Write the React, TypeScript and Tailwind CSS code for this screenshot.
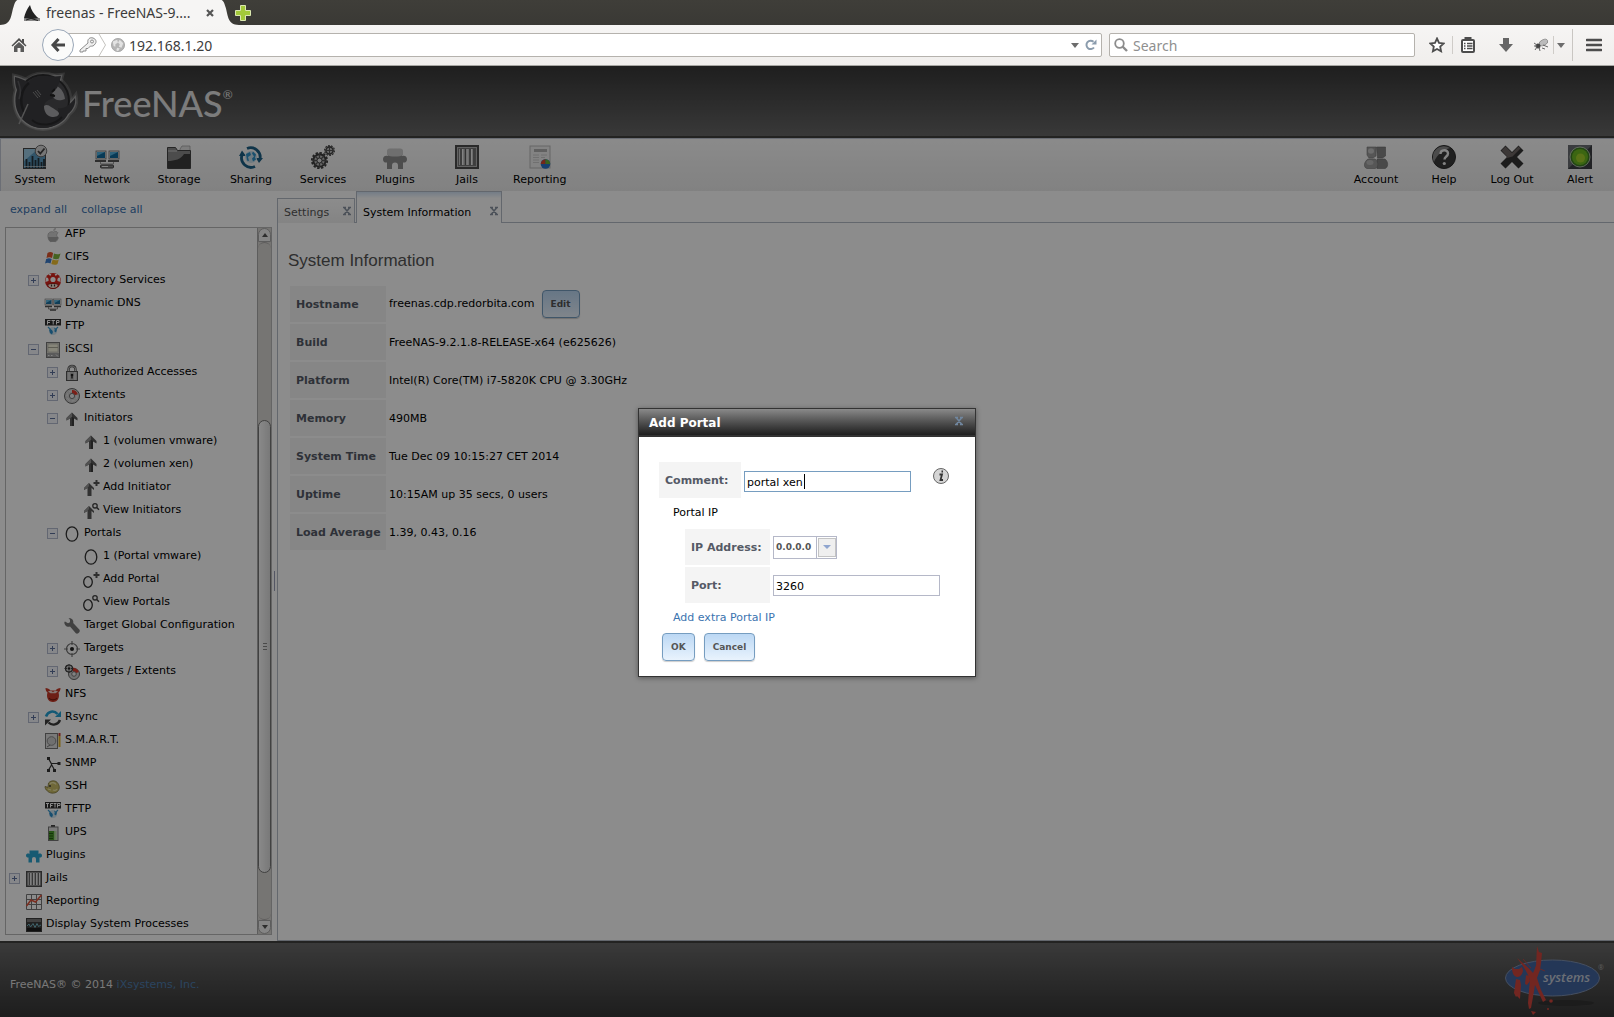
import { ReactNode } from "react";

type TreeNode = {
  label: string;
  level: 1 | 2 | 3 | 4;
  icon: string;
  toggle?: "plus" | "minus";
};

const TREE: TreeNode[] = [
  { label: "AFP", level: 2, icon: "apple" },
  { label: "CIFS", level: 2, icon: "windows" },
  { label: "Directory Services", level: 2, icon: "mushroom", toggle: "plus" },
  { label: "Dynamic DNS", level: 2, icon: "network" },
  { label: "FTP", level: 2, icon: "ftp" },
  { label: "iSCSI", level: 2, icon: "drive", toggle: "minus" },
  { label: "Authorized Accesses", level: 3, icon: "lock", toggle: "plus" },
  { label: "Extents", level: 3, icon: "extent", toggle: "plus" },
  { label: "Initiators", level: 3, icon: "arrow", toggle: "minus" },
  { label: "1 (volumen vmware)", level: 4, icon: "arrow" },
  { label: "2 (volumen xen)", level: 4, icon: "arrow" },
  { label: "Add Initiator", level: 4, icon: "arrowAdd" },
  { label: "View Initiators", level: 4, icon: "arrowView" },
  { label: "Portals", level: 3, icon: "portal", toggle: "minus" },
  { label: "1 (Portal vmware)", level: 4, icon: "portal" },
  { label: "Add Portal", level: 4, icon: "portalAdd" },
  { label: "View Portals", level: 4, icon: "portalView" },
  { label: "Target Global Configuration", level: 3, icon: "wrench" },
  { label: "Targets", level: 3, icon: "target", toggle: "plus" },
  { label: "Targets / Extents", level: 3, icon: "targetExtent", toggle: "plus" },
  { label: "NFS", level: 2, icon: "daemon" },
  { label: "Rsync", level: 2, icon: "rsync", toggle: "plus" },
  { label: "S.M.A.R.T.", level: 2, icon: "smart" },
  { label: "SNMP", level: 2, icon: "snmp" },
  { label: "SSH", level: 2, icon: "ssh" },
  { label: "TFTP", level: 2, icon: "tftp" },
  { label: "UPS", level: 2, icon: "ups" },
  { label: "Plugins", level: 1, icon: "plugin" },
  { label: "Jails", level: 1, icon: "jail", toggle: "plus" },
  { label: "Reporting", level: 1, icon: "chart" },
  { label: "Display System Processes", level: 1, icon: "processes" },
];

const INDENT = {
  1: "pl-[3px]",
  2: "pl-[22px]",
  3: "pl-[41px]",
  4: "pl-[60px]",
};

const INFO = [
  ["Hostname", "freenas.cdp.redorbita.com"],
  ["Build", "FreeNAS-9.2.1.8-RELEASE-x64 (e625626)"],
  ["Platform", "Intel(R) Core(TM) i7-5820K CPU @ 3.30GHz"],
  ["Memory", "490MB"],
  ["System Time", "Tue Dec 09 10:15:27 CET 2014"],
  ["Uptime", "10:15AM up 35 secs, 0 users"],
  ["Load Average", "1.39, 0.43, 0.16"],
];

const upArrow = (
  <>
    <path d="M8 1.500l5.500 5.500v2.500L10 7.500V15H6V7.500L2.500 9.500V7z" fill="#5a5a5a" />
    <path d="M8 1.500l-5.500 5.500v2.500L6 7.500l2-2z" fill="#949494" />
    <path d="M8 6v9h2V7z" fill="#3c3c3c" />
  </>
);

const smallUpArrow = (
  <>
    <path d="M6 3l5 5v2L8.500 8v8h-4V8L1 10V8z" fill="#5a5a5a" />
    <path d="M6 3L1 8v2l3.500-2L6 6z" fill="#949494" />
  </>
);

const plusBadge = <path d="M13.500 0v6M10.500 3h6" stroke="#555" strokeWidth="2" />;

const lensBadge = (
  <>
    <circle cx="12" cy="2.800" r="2.200" fill="none" stroke="#444" strokeWidth="1.300" />
    <path d="M13.700 4.500l2.300 2.300" stroke="#444" strokeWidth="1.500" />
  </>
);

const globe = (
  <>
    <circle cx="8" cy="12" r="4" fill="#d3e6f1" />
    <path d="M4 10.500l3 .5 1 2-1 2.500-2-1.500zM9 8.500l3 2-1 3-2-1.500 1-1z" fill="#2b8fca" />
    <path d="M3 8l3 3M13 8l-3 3" stroke="#3c9bd0" strokeWidth="1.200" />
  </>
);

const crosshair = (
  <>
    <circle cx="8" cy="8" r="5.500" fill="none" stroke="#666" strokeWidth="1.200" />
    <circle cx="8" cy="8" r="2" fill="#222" />
    <path d="M8 0v4M8 12v4M0 8h4M12 8h4" stroke="#777" strokeWidth="1.200" />
  </>
);

const ICONS: Record<string, ReactNode> = {
  apple: (
    <>
      <path
        d="M8.500 5c1.500-1 3.500-.8 4.500.8-1.800 1.200-1.700 4 .4 4.900-.7 2-1.800 4-3.200 4-1 0-1.300-.5-2.200-.5s-1.300.5-2.200.5C3.800 14.700 1.500 8.500 3.800 6 5 4.600 7 4.400 8.500 5z"
        fill="#d2d2d2"
        stroke="#a0a0a0"
        strokeWidth=".6"
      />
      <path d="M8.200 4C8.200 2 9.500.8 11 .8 11 2.800 9.800 4 8.200 4z" fill="#c4c4c4" />
      <path d="M3 10h10c.8 1-2 4.700-3.200 4.700H5.500C4 14 3.200 12 3 10z" fill="#a5a5a5" />
    </>
  ),
  windows: (
    <>
      <path d="M2.500 3c2-1.200 3.600-1.200 5.600 0L7 8C5 7 3.500 7 1.500 8z" fill="#e0552c" />
      <path d="M9 3.500c2 1 4 1.200 6.500 0L14 8.500c-2 1-4 .8-6 0z" fill="#7fb53c" />
      <path d="M1.200 9c2-1 3.600-1 5.500 0L5.500 13.500c-2-1-3.500-1-5.500 0z" fill="#3d7dcc" />
      <path d="M7.600 9.500c2 1 4 1.200 6.200 0L12.500 14c-2 1.200-4 1-6.200 0z" fill="#f2c230" />
    </>
  ),
  mushroom: (
    <>
      <circle cx="8" cy="8" r="8" fill="#d9251d" />
      <circle cx="8" cy="6.500" r="2.600" fill="#fff" />
      <path d="M1 4.500C3 4 4 6 3.500 8L.3 9zM15 4.500C13 4 12 6 12.500 8l3.200 1z" fill="#fff" />
      <path d="M4 1.200l2 .8M12 1.200L10 2" stroke="#fff" strokeWidth="1.500" />
      <path d="M2.500 11.500c3-1.500 8-1.500 11 0-.5 2.500-2.500 4-5.500 4s-5-1.500-5.500-4z" fill="#f7e3d6" stroke="#a01a14" />
      <path d="M6.500 11.500v2M9.500 11.500v2" stroke="#333" strokeWidth="1.200" />
    </>
  ),
  network: (
    <>
      <rect x="0" y="3" width="7.500" height="6" fill="#efefef" stroke="#777" strokeWidth=".6" />
      <rect x="8.500" y="3" width="7.500" height="6" fill="#efefef" stroke="#777" strokeWidth=".6" />
      <path d="M1 4h5.500v4H1zM9.500 4H15v4H9.500z" fill="#1c6f9f" />
      <path d="M1 4h5.500L1 7zM9.500 4H15L9.500 7z" fill="#5fb9e2" />
      <path d="M0 10.500h7M9 10.500h7" stroke="#555" strokeWidth="1.600" />
      <path d="M3.500 11v2h9v-2" stroke="#888" fill="none" />
      <rect x="5" y="13" width="6" height="2" fill="#777" />
    </>
  ),
  ftp: (
    <>
      {globe}
      <rect width="16" height="6.500" fill="#303030" />
      <path d="M2.500 5.500v-4h3M2.500 3.500h2.500M6.500 1.500h3.500M8.200 1.500v4M11.500 5.500v-4h2.500v2h-2.500" stroke="#fff" fill="none" />
    </>
  ),
  tftp: (
    <>
      {globe}
      <rect width="16" height="6.500" fill="#303030" />
      <path d="M1 1.500h3M2.500 1.500v4M5.500 5.500v-4H8M5.500 3.500h2M8.500 1.500h3M10 1.500v4M12.500 5.500v-4H15v2h-2.500" stroke="#fff" fill="none" />
    </>
  ),
  drive: (
    <>
      <rect x="1.500" y=".5" width="13" height="15" fill="#d8d6c8" stroke="#777" />
      <rect x="3" y="2" width="10" height="8" fill="#f5f3dc" stroke="#aaa" strokeWidth=".6" />
      <path d="M3 5.500h10" stroke="#a9a898" />
      <rect x="2" y="11" width="12" height="4" fill="#a5a5a5" />
      <path d="M3 13.500h1.500M6 13.500h1.500M11 12.500l2 2" stroke="#eee" />
    </>
  ),
  lock: (
    <>
      <path d="M4.500 7V4.500C4.500 2.300 6 1 8 1s3.500 1.300 3.500 3.500V7" fill="none" stroke="#555" strokeWidth="2.400" />
      <path d="M4.500 7V4.500C4.500 2.300 6 1 8 1s3.500 1.300 3.500 3.500V7" fill="none" stroke="#eee" strokeWidth=".8" />
      <rect x="2.500" y="6.500" width="11" height="9" fill="#b9b9b9" stroke="#555" />
      <path d="M5 7v8M11 7v8" stroke="#e6e6e6" />
      <circle cx="8" cy="10" r="1.300" fill="#222" />
      <path d="M8 10v3.500" stroke="#222" strokeWidth="1.400" />
    </>
  ),
  extent: (
    <>
      <circle cx="8" cy="8" r="7.500" fill="#d0d0d0" stroke="#666" />
      <circle cx="8" cy="8" r="5" fill="none" stroke="#ececec" strokeDasharray="3 2" />
      <path d="M8 8V2a6 6 0 015.800 4.300z" fill="#e03a2c" />
      <circle cx="8" cy="8" r="2.600" fill="#ececec" stroke="#777" />
    </>
  ),
  arrow: upArrow,
  arrowAdd: (
    <>
      {smallUpArrow}
      {plusBadge}
    </>
  ),
  arrowView: (
    <>
      {smallUpArrow}
      {lensBadge}
    </>
  ),
  portal: <ellipse cx="8" cy="8" rx="5.800" ry="7.200" fill="none" stroke="#333" strokeWidth="1.300" />,
  portalAdd: (
    <>
      <ellipse cx="5" cy="10" rx="4.300" ry="5.300" fill="none" stroke="#333" strokeWidth="1.300" />
      {plusBadge}
    </>
  ),
  portalView: (
    <>
      <ellipse cx="5" cy="10" rx="4.300" ry="5.300" fill="none" stroke="#333" strokeWidth="1.300" />
      {lensBadge}
    </>
  ),
  wrench: (
    <path
      d="M1 3.500l3 1.800 2-1L6 1.800 4.500.3C7.500-.5 10 2 9.200 5l6.300 6.800c1.200 2-1.700 5-3.700 3.500L6 8.500C3 9.800 0 7 .4 4z"
      fill="#777"
    />
  ),
  target: crosshair,
  targetExtent: (
    <>
      <circle cx="10" cy="10" r="5.500" fill="#d0d0d0" stroke="#666" />
      <path d="M8 3.500c3 0 6 1.500 6.800 4.500L10 10z" fill="#e03a2c" />
      <circle cx="10" cy="10" r="2.300" fill="#eee" stroke="#777" />
      <circle cx="5" cy="4.500" r="3.500" fill="#ccc" stroke="#333" strokeWidth="1.200" />
      <circle cx="5" cy="4.500" r="1.300" fill="#222" />
      <path d="M5 0v2.500M5 6.500V9M.5 4.500H3M7 4.500h2.500" stroke="#444" />
    </>
  ),
  daemon: (
    <>
      <path d="M.5 1c2 0 4 1 5 2.500h5C11.500 2 13.500 1 15.500 1c0 2-.8 3.500-2 4.500C15 10 13 15 8 15S1 10 2.500 5.500C1.300 4.500.5 3 .5 1z" fill="#c73a28" />
      <path d="M3 4.500c1.500-1.300 4-1 5 .8 1-1.800 3.500-2.100 5-.8l-2.500 1.800h-5z" fill="#f1d7d1" />
      <path d="M4 11c1.500 2.500 6.500 2.500 8 0" stroke="#7a1c12" fill="none" strokeWidth="1.200" />
    </>
  ),
  rsync: (
    <>
      <path d="M1 6.500C3 1 9 0 12.500 4" fill="none" stroke="#23a3d6" strokeWidth="2.600" />
      <path d="M10 7h6V1z" fill="#23a3d6" />
      <path d="M15 10c-2 5-8 6-11.500 2.500" fill="none" stroke="#3c3c3c" strokeWidth="2.400" />
      <path d="M6 9.500H0v6z" fill="#3c3c3c" />
    </>
  ),
  smart: (
    <>
      <rect x=".5" y=".5" width="12" height="15" fill="#dedede" stroke="#777" />
      <circle cx="6.500" cy="8" r="4.300" fill="#cdcdcd" stroke="#8a8a8a" />
      <path d="M2 14l3-2" stroke="#777" />
      <path d="M14.500 3v11" stroke="#e5b52a" strokeWidth="2" />
      <path d="M14.500 0v3" stroke="#c63a2d" strokeWidth="2" />
    </>
  ),
  snmp: (
    <>
      <path d="M3.500 2.500L6.500 8v1L3.500 14M6.500 8.500L9.500 14M6.500 7.500H14" stroke="#333" fill="none" strokeWidth="1.200" />
      <path d="M2 1h3v3H2zM2 13h3v3H2zM8 13h3v3H8zM12.500 6h3v3h-3z" fill="#333" />
    </>
  ),
  ssh: (
    <>
      <path d="M3.500 4C6 1 11 1 13 4.500c2 3 1.500 6-.5 8-3 2.500-8 2-10-.5C.5 11 0 8.500 0 7.500l3 .8z" fill="#cbbd68" stroke="#7c753f" strokeWidth=".8" />
      <path d="M5 5c2-2 5-1.500 6 .5M3 10l3 1M8 11c2 1 3.500 0 4-1" stroke="#eee7ad" fill="none" strokeWidth="1.300" />
      <circle cx="5" cy="7" r=".9" fill="#333" />
    </>
  ),
  ups: (
    <>
      <rect x="6" y="0" width="4" height="2" fill="#444" />
      <rect x="3.500" y="2" width="9.500" height="13.500" fill="#dedede" stroke="#777" />
      <rect x="4" y="6" width="5.500" height="9" fill="#4c9c2c" />
      <path d="M4 8.500h4M4 11h4M4 13.500h4" stroke="#266013" />
      <path d="M10.500 6v9" stroke="#b4dc9f" strokeWidth="2" />
    </>
  ),
  plugin: (
    <path d="M3.500 2.500h9V6c1-.8 3.500-.6 3.500 1.500 0 2-1.500 2-2 2H13.500v5H10v-3.500a2 2 0 00-4 0v3.500H2.500v-5H2c-1 0-2-.5-2-2C0 5.400 2.500 5.200 3.500 6z" fill="#2ba5d0" />
  ),
  jail: (
    <>
      <rect x=".7" y=".7" width="14.600" height="14.600" fill="#bbb" stroke="#4d4d4d" strokeWidth="1.400" />
      <path d="M4.500 2v12M7.500 2v12M10.500 2v12M13.500 2v12" stroke="#e8e8e8" />
      <path d="M3.500 2v12M6.500 2v12M9.500 2v12M12.500 2v12" stroke="#666" />
    </>
  ),
  chart: (
    <>
      <path d="M.5 .5h15v15H.5zM5.500.5v15M10.500.5v15M.5 5.500h15M.5 10.500h15" fill="none" stroke="#777" />
      <path d="M.5 12L5 6l4.500 2L15.500 1" fill="none" stroke="#e0553c" strokeWidth="1.600" />
    </>
  ),
  processes: (
    <>
      <rect x="0" y="1" width="16" height="14" fill="#3c3c3c" />
      <rect x="1" y="2" width="14" height="3" fill="#777" />
      <rect x="1" y="11" width="14" height="3" fill="#1c1c1c" />
      <path d="M1 9l2-2 1.500 3L7 6.500l2 4 2-4 1.500 3L15 8" fill="none" stroke="#74b5c4" />
    </>
  ),
};

const TOOLS: Record<string, ReactNode> = {
  System: (
    <>
      <rect x=".5" y="3.500" width="22" height="20" fill="#5a9abf" stroke="#444" />
      <path d="M1 4h14L1 16z" fill="#9ccbe4" />
      <path d="M3.500 23v-9M6.500 23v-6M9.500 23V11M12.500 23v-8M15.500 23V13M18.500 23v-6M21 23v-9" stroke="#26343d" strokeWidth="1.800" />
      <path d="M1 21.500h22" stroke="#ddd" strokeWidth=".6" />
      <circle cx="18" cy="6" r="5.800" fill="#d8d8d8" stroke="#6c6c6c" />
      <path d="M15 6l2.300 2.600L21.500 3.500" fill="none" stroke="#444" strokeWidth="1.800" />
    </>
  ),
  Network: (
    <>
      <rect x="1" y="6" width="10" height="8" fill="#eee" stroke="#666" strokeWidth=".8" />
      <rect x="14" y="6" width="10" height="8" fill="#eee" stroke="#666" strokeWidth=".8" />
      <path d="M2 7h8v6H2zM15 7h8v6h-8z" fill="#0f6a9d" />
      <path d="M2 7h8l-8 4zM15 7h8l-8 4z" fill="#55b3e0" />
      <path d="M0 16h11M13 16h11" stroke="#555" strokeWidth="2" />
      <path d="M5.500 17v2h13v-2" stroke="#999" fill="none" />
      <rect x="5.500" y="20" width="13" height="3" rx="1" fill="#888" stroke="#444" />
      <path d="M7 21.500h6" stroke="#eee" />
    </>
  ),
  Storage: (
    <>
      <path d="M13 4l2-3h8v22H13z" fill="#e2e2e2" stroke="#999" strokeWidth=".7" />
      <path d="M.5 2.500h8l2 3h13v18H.5z" fill="#8a8a8a" stroke="#444" />
      <path d="M1 23v-7C8 16 14 14 17 9h6v14z" fill="#3c3c3c" />
      <path d="M1 6h9" stroke="#ccc" />
    </>
  ),
  Sharing: (
    <>
      <path d="M8 3.500A9.500 9.500 0 0121 14M16 21.500A9.500 9.500 0 013 10" fill="none" stroke="#1c5f85" strokeWidth="2.800" />
      <path d="M17 13h7l-4 5zM0 11h7L3 5.500z" fill="#1c5f85" />
      <circle cx="12" cy="12" r="6" fill="#c9dfeb" />
      <path d="M7 9l4-2 1 3-3 2 1 4-2-.5zM14 6.500l3 3-1 3 1 2-3 2-1-3 2-2-2-3z" fill="#3093c8" />
    </>
  ),
  Services: (
    <>
      <circle cx="8.500" cy="15.500" r="6.200" fill="#bdbdbd" stroke="#3c3c3c" strokeWidth="2" />
      <circle cx="8.500" cy="15.500" r="7.700" fill="none" stroke="#3c3c3c" strokeWidth="1.800" strokeDasharray="2.400 1.600" />
      <path d="M8.500 9v13M2 15.500h13M4 11l9 9M13 11l-9 9" stroke="#555" strokeWidth="1.300" />
      <circle cx="8.500" cy="15.500" r="2.500" fill="#ddd" stroke="#444" />
      <circle cx="18.500" cy="5.500" r="3.600" fill="#bdbdbd" stroke="#444" strokeWidth="1.600" />
      <circle cx="18.500" cy="5.500" r="4.900" fill="none" stroke="#444" strokeWidth="1.200" strokeDasharray="1.800 1.200" />
      <path d="M18.500 2v7M15 5.500h7" stroke="#555" />
    </>
  ),
  Plugins: (
    <>
      <path d="M5 10h14v1c2-1 5 0 5 3s-2 4-4 3.500V24h-5v-3.500a3 3 0 00-6 0V24H4v-6.500C2 18 0 17 0 14s3-4 5-3z" fill="#8c8c8c" />
      <path d="M4 10V6c0-1.500 1-2.500 2.500-2.500h11C19 3.500 20 4.500 20 6v4c-3 2-13 2-16 0z" fill="#cacaca" />
    </>
  ),
  Jails: (
    <>
      <rect x="1" y="1" width="22" height="22" fill="#b5b5b5" stroke="#4d4d4d" strokeWidth="2" />
      <rect x="3.500" y="3.500" width="17" height="17" fill="#c6c6c6" stroke="#777" />
      <path d="M6 4v16M10.500 4v16M15 4v16M19 4v16" stroke="#5c5c5c" strokeWidth="1.600" />
      <path d="M7.500 4v16M12 4v16M16.500 4v16" stroke="#efefef" />
    </>
  ),
  Reporting: (
    <>
      <rect x="2" y="1" width="20" height="22" fill="#efefef" stroke="#b9b9b9" />
      <rect x="6" y="4" width="13" height="3" fill="#b0b0b0" />
      <path d="M5 10h6M5 12.500h6M5 15h6M5 17.500h6M13 10h6M13 12.500h4" stroke="#ccc" />
      <circle cx="17.500" cy="19" r="4.800" fill="#2a73c9" />
      <path d="M17.500 19v-4.800a4.800 4.800 0 00-4.700 4.800z" fill="#d5482f" />
      <path d="M17.500 19v-4.800a4.800 4.800 0 014.700 4.800z" fill="#6bb536" />
    </>
  ),
  Account: (
    <>
      <path d="M12.500 2h9v9l-3 2h-5zM13 14h8c4 3 3 9 0 9.500h-8z" fill="#858585" stroke="#6b6b6b" strokeWidth=".6" />
      <path d="M3 2h9v9l-3 2H5l-2-3zM4 14h7c4 3 3.500 9 0 9.500H3c-4-1-3-7 1-9.500z" fill="#9d9d9d" stroke="#747474" strokeWidth=".6" />
      <ellipse cx="7" cy="6" rx="3" ry="2.800" fill="#c6c6c6" />
      <ellipse cx="6" cy="17.500" rx="3.500" ry="2.500" fill="#bababa" />
    </>
  ),
  Help: (
    <>
      <circle cx="12" cy="12" r="11.500" fill="#3b3b3b" stroke="#2a2a2a" />
      <path d="M2 17A11 11 0 0118 3C12 5 5 9 2 17z" fill="#8a8a8a" />
      <path d="M8.500 9c0-5 7.500-5 7.500-.5 0 3-3.500 3-3.500 6" fill="none" stroke="#eee" strokeWidth="2.400" />
      <circle cx="12.300" cy="18.500" r="1.600" fill="#eee" />
    </>
  ),
  "Log Out": (
    <>
      <path d="M5.500.5L12 7l6.500-6.500 5 5L17 12l6.500 6.500-5 5L12 17l-6.500 6.500-5-5L7 12 .5 5.500z" fill="#333" />
      <path d="M5.500 1.500L12 8l6.500-6.500 2 2-8 8-7 2L7.500 12l-6-6.500z" fill="#6e6664" />
    </>
  ),
  Alert: (
    <>
      <rect width="24" height="24" fill="#3c3f44" />
      <path d="M0 0h24L0 24z" fill="#6b6e73" />
      <circle cx="12" cy="12" r="10" fill="#3f7f24" stroke="#c9d6c4" strokeWidth=".8" />
      <circle cx="12" cy="12" r="8" fill="#6dbb22" />
      <circle cx="12.500" cy="13" r="4.500" fill="#a3cf2a" />
    </>
  ),
};

function TreeIcon({ name }: { name: string }) {
  return (
    <svg viewBox="0 0 16 16" className="size-4 shrink-0 overflow-visible" aria-hidden="true">
      {ICONS[name]}
    </svg>
  );
}

function ToolButton({ name }: { name: string }) {
  return (
    <button
      type="button"
      className="flex min-w-[64px] flex-col items-center gap-1 px-2 pt-[6px] text-[11px] leading-[14px] text-black"
    >
      <svg viewBox="0 0 24 24" className="size-6 overflow-visible" aria-hidden="true">
        {TOOLS[name]}
      </svg>
      {name}
    </button>
  );
}

function BlueButton({ children, type = "button" }: { children: string; type?: "button" | "submit" }) {
  return (
    <button
      type={type}
      className="h-7 rounded-[4px] border border-[#769dc0] bg-linear-to-b from-[#bcd8f4] to-[#e9f3fd] px-2 pt-px text-[9px] font-bold text-[#555] shadow-[0_1px_1px_rgba(0,0,0,0.2)]"
    >
      {children}
    </button>
  );
}

function Toggle({ kind }: { kind?: "plus" | "minus" }) {
  if (!kind) return <span className="w-[11px] shrink-0" />;

  return (
    <button
      type="button"
      aria-label={kind === "plus" ? "expand" : "collapse"}
      className="flex size-[11px] shrink-0 items-center justify-center border border-[#b4bccf] bg-[#f4f6fb]"
    >
      <svg viewBox="0 0 5 5" className="size-[5px]" aria-hidden="true">
        <path d={kind === "plus" ? "M0 2.500h5M2.500 0v5" : "M0 2.500h5"} stroke="#5b6f9c" />
      </svg>
    </button>
  );
}

function BrowserChrome() {
  return (
    <div className="shrink-0 font-['Noto_Sans',sans-serif] text-sm text-[#3c3c3c]">
      <div className="flex h-[25px] bg-linear-to-b from-[#3f3e39] to-[#3a3935]">
        <svg viewBox="0 0 18 25" className="h-[25px] w-[18px]" aria-hidden="true">
          <path d="M0 25C12 25 11 14 13.500 7 15 2 16 0 18 0v25z" fill="#f6f5f4" />
        </svg>
        <div className="flex w-[203px] items-center bg-[#f6f5f4] pl-[6px]">
          <svg viewBox="0 0 16 16" className="size-4 shrink-0" aria-hidden="true">
            <path d="M0 13C1 8 3 4 6 0c1 5 4 9 7 12l3 2v2H0z" fill="#222" />
            <path d="M0 13l8 1 8-1v3H0z" fill="#888" />
            <path d="M2 15l5-1.500 7 2" stroke="#222" fill="none" />
          </svg>
          <span className="min-w-0 flex-1 pl-[6px] leading-5 whitespace-nowrap">freenas - FreeNAS-9....</span>
          <button type="button" aria-label="Close tab" className="mr-[5px] p-0.5">
            <svg viewBox="0 0 8 8" className="size-2" aria-hidden="true">
              <path d="M1 1l6 6M7 1L1 7" stroke="#555" strokeWidth="2.200" />
            </svg>
          </button>
        </div>
        <svg viewBox="0 0 18 25" className="h-[25px] w-[18px]" aria-hidden="true">
          <path d="M18 25C6 25 7 14 4.500 7 3 2 2 0 0 0v25z" fill="#f6f5f4" />
        </svg>
        <button type="button" aria-label="New tab" className="-ml-1 self-center">
          <svg viewBox="0 0 16 16" className="size-4" aria-hidden="true">
            <path d="M5.500.5h5v5h5v5h-5v5h-5v-5h-5v-5h5z" fill="#a3c93a" stroke="#dbe8b0" />
          </svg>
        </button>
      </div>

      <div className="flex h-[41px] items-center border-b border-[#a6a6a2] bg-linear-to-b from-[#f6f5f4] to-[#f0eeec] pl-[11px]">
        <button type="button" aria-label="Home">
          <svg viewBox="0 0 16 16" className="size-4" aria-hidden="true">
            <path d="M8 1L.5 8.500l1 1L8 3.500l6.500 6 1-1L13 6V2h-2v2z" fill="#4d4d4d" />
            <path d="M3 9.500L8 5l5 4.500V15H9.500v-4h-3v4H3z" fill="#5a5a5a" />
          </svg>
        </button>
        <button
          type="button"
          aria-label="Back"
          className="z-10 ml-[15px] flex size-8 items-center justify-center rounded-full border border-[#9aa7b8] bg-[#fbfbfa]"
        >
          <svg viewBox="0 0 16 16" className="size-4" aria-hidden="true">
            <path d="M8.500 2L3 8l5.500 6M3 8h12" fill="none" stroke="#474747" strokeWidth="3" />
          </svg>
        </button>
        <div className="-ml-2 flex h-6 flex-1 items-center rounded-r-[2px] border border-[#b5b2ad] bg-white pl-3">
          <svg viewBox="0 0 28 22" className="h-[22px] w-7 shrink-0" aria-hidden="true">
            <path d="M1 16l8-7c-1-4 2-6 5-5s4 4 2 6c-1 2-3 2.500-4.500 2L9 14.500H7V17H4v1H1z" fill="#f0f0f0" stroke="#8d8d8d" />
            <circle cx="13" cy="7.500" r="1.500" fill="none" stroke="#8d8d8d" />
            <path d="M20 0l6.500 11L20 22" fill="none" stroke="#c4c2be" />
          </svg>
          <svg viewBox="0 0 16 16" className="ml-1 size-[14px] shrink-0" aria-hidden="true">
            <circle cx="8" cy="8" r="7.500" fill="#b5b5b5" stroke="#a5a5a5" />
            <path d="M2 4l5-2 1 3-3 2v3l-2-1zM10 2l4 4-2 5-3-1 1-3-2-2zM7 11l3 1-2 3-2-1z" fill="#e3e3e3" />
          </svg>
          <input
            aria-label="Address"
            defaultValue="192.168.1.20"
            className="min-w-0 flex-1 bg-transparent pt-0.5 pl-1 leading-5 outline-none"
          />
          <svg viewBox="0 0 8 5" className="h-[5px] w-2" aria-hidden="true">
            <path d="M0 0h8L4 5z" fill="#6c6c6c" />
          </svg>
          <button type="button" aria-label="Reload" className="mr-1 ml-[6px]">
            <svg viewBox="0 0 12 12" className="size-3" aria-hidden="true">
              <path d="M9 8.500A4.200 4.200 0 118.500 2.800" fill="none" stroke="#8b9cad" strokeWidth="2" />
              <path d="M6.500 5.500h5V.5z" fill="#8b9cad" />
            </svg>
          </button>
        </div>
        <div className="ml-[7px] flex h-6 w-[306px] items-center rounded-[2px] border border-[#b5b2ad] bg-white pl-1">
          <svg viewBox="0 0 14 14" className="size-[14px] shrink-0" aria-hidden="true">
            <circle cx="5.500" cy="5.500" r="4.300" fill="none" stroke="#8c8c8c" strokeWidth="1.800" />
            <path d="M8.500 8.500L13 13" stroke="#8c8c8c" strokeWidth="2.400" />
          </svg>
          <input
            aria-label="Search"
            placeholder="Search"
            className="min-w-0 flex-1 bg-transparent pt-0.5 pl-[5px] leading-5 outline-none placeholder:text-[#8f8f8f]"
          />
        </div>
        <div className="flex items-center pl-[14px]">
          <button type="button" aria-label="Bookmark this page">
            <svg viewBox="0 0 16 16" className="size-4" aria-hidden="true">
              <path d="M8 1.500l2 4.300 4.700.6-3.500 3.200.9 4.700L8 12l-4.100 2.300.9-4.700L1.300 6.400 6 5.800z" fill="#fff" stroke="#4d4d4d" strokeWidth="1.800" />
            </svg>
          </button>
          <span className="mx-[7px] h-[18px] w-px bg-[#cfccc8]" />
          <button type="button" aria-label="Bookmarks">
            <svg viewBox="0 0 16 16" className="size-4" aria-hidden="true">
              <path d="M5.500 3V1h5v2" fill="none" stroke="#4d4d4d" strokeWidth="2" />
              <rect x="2" y="3" width="12" height="12" rx="1" fill="#fff" stroke="#4d4d4d" strokeWidth="2" />
              <path d="M4 6.500h1.500M7 6.500h5.500M4 9h1.500M7 9h5.500M4 11.500h1.500M7 11.500h5.500" stroke="#4d4d4d" strokeWidth="1.300" />
            </svg>
          </button>
          <button type="button" aria-label="Downloads" className="ml-[22px]">
            <svg viewBox="0 0 16 16" className="size-4" aria-hidden="true">
              <path d="M5 1h6v6h4l-7 8-7-8h4z" fill="#666" />
            </svg>
          </button>
          <button type="button" aria-label="Firebug" className="ml-[19px]">
            <svg viewBox="0 0 16 16" className="size-4" aria-hidden="true">
              <ellipse cx="10.500" cy="5.500" rx="4.500" ry="2.800" fill="#bbb" stroke="#777" strokeWidth=".6" transform="rotate(-25 10.500 5.500)" />
              <circle cx="5" cy="9" r="2.500" fill="#444" />
              <path d="M1 6l3 2M2 13l2-3M7 14l-1-4M15 10l-5-2M1 9h3M9 11l3 1" stroke="#666" />
            </svg>
          </button>
          <span className="ml-1 h-[18px] w-px bg-[#cfccc8]" />
          <svg viewBox="0 0 8 5" className="ml-[3px] h-[5px] w-2" aria-hidden="true">
            <path d="M0 0h8L4 5z" fill="#6c6c6c" />
          </svg>
          <span className="ml-[7px] h-8 w-px bg-[#c9c6c2]" />
          <button type="button" aria-label="Menu" className="mr-3 ml-[13px]">
            <svg viewBox="0 0 16 14" className="h-[14px] w-4" aria-hidden="true">
              <path d="M1 2h14M1 7h14M1 12h14" stroke="#4d4d4d" strokeWidth="2.600" strokeLinecap="round" />
            </svg>
          </button>
        </div>
      </div>
    </div>
  );
}

function SharkLogo() {
  const body =
    "M3 7c5 1 9 3 13 5 4-4 8-6 13-6 7 0 13 1 20 0-1 4-2 8-4 12-2 2-5 3-5 6 3-1 3 3 0 5-5 1-8 4-8 8 0 6 4 10 9 10 4-1 6-4 5-9 6 1 11-2 17-10 1 6-2 12-7 16-3 7-13 14-26 14-8 0-15-4-20-9C3 41 2 29 5 20 3 15 3 11 3 7z";

  return (
    <svg viewBox="0 0 68 62" className="h-[62px] w-[68px] overflow-visible" role="img" aria-label="FreeNAS shark">
      <circle cx="31" cy="31" r="26" fill="none" stroke="#999" strokeOpacity=".35" strokeWidth="7" />
      <path d={body} fill="none" stroke="#bbb" strokeOpacity=".3" strokeWidth="6" />
      <path d={body} fill="none" stroke="#c4c4c4" strokeOpacity=".6" strokeWidth="2.500" />
      <circle cx="31" cy="31" r="26" fill="#4c4c4f" stroke="#2a2a2c" strokeWidth="2" />
      <path d="M45 16c5 3 7 7 8 13-5 2-9 2-12-2-2-4 0-8 4-11z" fill="#a5a5a8" />
      <path d={body} fill="#3d3d41" />
      <path d="M17 13C9 19 7 32 12 42" fill="none" stroke="#2a2a2d" strokeWidth="2.500" />
      <path d="M20 50c8 7 22 6 30-3" fill="none" stroke="#2a2a2d" strokeWidth="2" />
      <path d="M32 36c2-2 5-1 7 1 3 2 6 3 8 6 0 3-3 4-7 4-5-1-8-5-8-11z" fill="#a8a8ab" />
      <path d="M40 22l3-3M38 25l5 1" stroke="#222" strokeWidth="2" />
      <path d="M21 22l5 6M23 21l5 6M25 20l4 5" stroke="#888" />
      <path d="M16 34L7 54" stroke="#999" strokeWidth="1.500" />
      <path d="M6 11c3 8 3 12 1 18" stroke="#5c5c60" strokeWidth="1.500" fill="none" />
    </svg>
  );
}

function Header() {
  return (
    <header className="flex h-[72px] shrink-0 items-center border-b-2 border-[#40403f] bg-linear-to-b from-[#383838] to-[#686868] pl-3">
      <SharkLogo />
      <div className="flex pt-1 pl-[2px] font-['Lato',sans-serif] text-[#e2e2e2]">
        <span className="text-[36px] leading-[48px] font-medium">FreeNAS</span>
        <span className="pt-1 text-xs leading-6">®</span>
      </div>
    </header>
  );
}

function Sidebar() {
  return (
    <aside className="flex w-[277px] shrink-0 flex-col pl-[5px]">
      <div className="flex gap-[14px] pt-3 pb-[10px] pl-[5px] leading-[14px]">
        <a href="#expand" className="text-[#3b73af]">
          expand all
        </a>
        <a href="#collapse" className="text-[#3b73af]">
          collapse all
        </a>
      </div>
      <div className="flex min-h-0 flex-1 items-stretch pb-[6px]">
        <div className="flex w-[267px] border border-[#b8b8b8]">
          <ul className="h-full flex-1 overflow-hidden">
            {TREE.map((node, i) => (
              <li key={node.label} className={i === 0 ? "-mt-[5px]" : ""}>
                <div className={`flex h-[23px] items-center ${INDENT[node.level]}`}>
                  <Toggle kind={node.toggle} />
                  <span className="ml-[6px] flex">
                    <TreeIcon name={node.icon} />
                  </span>
                  <span className="pb-px pl-1 leading-[14px] whitespace-nowrap">{node.label}</span>
                </div>
              </li>
            ))}
          </ul>
          {/* scrollbar */}
          <div className="flex w-[14px] flex-col border-l border-[#aaa] bg-[#d8d5d1]">
            <div className="flex h-[14px] items-center justify-center rounded-t-full border border-[#a9a9a9] bg-[#f2f2f2]">
              <svg viewBox="0 0 6 4" className="h-1 w-[6px]" aria-hidden="true">
                <path d="M0 4h6L3 0z" fill="#555" />
              </svg>
            </div>
            <div className="flex-[178] rounded-t-full border-t border-[#a9a9a9]" />
            <div className="flex flex-[454] flex-col items-center justify-center gap-0.5 rounded-full border border-[#777] bg-linear-to-r from-[#fafafa] to-[#dcdcdc]">
              <span className="h-px w-1 bg-[#888]" />
              <span className="h-px w-1 bg-[#888]" />
              <span className="h-px w-1 bg-[#888]" />
            </div>
            <div className="flex-[46] rounded-b-full border-b border-[#a9a9a9]" />
            <div className="flex h-[14px] items-center justify-center rounded-b-full border border-[#a9a9a9] bg-[#f2f2f2]">
              <svg viewBox="0 0 6 4" className="h-1 w-[6px]" aria-hidden="true">
                <path d="M0 0h6L3 4z" fill="#555" />
              </svg>
            </div>
          </div>
        </div>
        <span className="ml-0.5 h-5 w-px self-center bg-[#9a9db5]" />
      </div>
    </aside>
  );
}

function CloseGlyph({ className }: { className: string }) {
  return (
    <svg viewBox="0 0 8 8" className={`size-2 shrink-0 overflow-visible ${className}`} aria-hidden="true">
      <path d="M0 .5h3M5 .5h3M0 7.500h3M5 7.500h3M1.500 1l5 6M6.500 1l-5 6" stroke="currentColor" strokeWidth="1.500" />
    </svg>
  );
}

function Content() {
  return (
    <main className="flex min-w-0 flex-1 flex-col">
      <div className="flex items-end" role="tablist">
        <button
          type="button"
          role="tab"
          aria-selected="false"
          className="flex h-[25px] w-[78px] items-start justify-between border border-b-0 border-[#b5bcc7] bg-linear-to-b from-white to-[#f0f0f0] px-[3px] pt-[6px] pl-[6px] leading-4 text-[#555]"
        >
          Settings
          <CloseGlyph className="mt-0.5 text-[#8a94a2]" />
        </button>
        <span className="w-px self-stretch border-b border-[#b5bcc7]" />
        <button
          type="button"
          role="tab"
          aria-selected="true"
          className="flex h-8 w-[146px] items-start justify-between border border-b-0 border-[#b5bcc7] bg-linear-to-b from-[#d3e3f5] to-white to-20% px-[3px] pt-[13px] pl-[6px] leading-4"
        >
          System Information
          <CloseGlyph className="mt-0.5 text-[#8a94a2]" />
        </button>
        <span className="flex-1 self-stretch border-b border-[#b5bcc7]" />
      </div>
      <section className="flex-1 border-b border-l border-[#b5bcc7] px-[10px] pt-[26px]">
        <h1 className="font-['Liberation_Sans',sans-serif] text-[17px] leading-6 text-[#555]">System Information</h1>
        <table className="mt-[11px] border-separate border-spacing-0.5">
          <tbody>
            {INFO.map(([label, value]) => (
              <tr key={label}>
                <th className="h-9 w-24 pt-[3px] bg-[#f4f4f4] pl-[6px] text-left text-[11px] whitespace-nowrap text-[#555a66]">
                  {label}
                </th>
                {label === "Hostname" ? (
                  <td className="h-9 py-0 pl-px whitespace-nowrap">
                    <span className="flex items-center gap-[7px]">
                      {value}
                      <BlueButton>Edit</BlueButton>
                    </span>
                  </td>
                ) : (
                  <td className="h-9 pt-[3px] pb-0 pl-px whitespace-nowrap">{value}</td>
                )}
              </tr>
            ))}
          </tbody>
        </table>
      </section>
    </main>
  );
}

function Footer() {
  return (
    <footer className="flex h-[76px] shrink-0 items-center justify-between border-t-2 border-[#40403f] bg-linear-to-b from-[#6a6a6a] to-[#363636] pl-[10px]">
      <p className="pt-[10px] leading-[14px] text-[#dcdcdc]">
        FreeNAS® © 2014{" "}
        <a href="#ixsystems" className="text-[#4e7dae]">
          iXsystems, Inc.
        </a>
      </p>
      <svg viewBox="0 0 110 74" className="h-[74px] w-[110px]" role="img" aria-label="iXsystems">
        <ellipse cx="62" cy="60" rx="28" ry="3" fill="#333" />
        <ellipse cx="48.500" cy="35" rx="47" ry="18" fill="#42649f" stroke="#7f91b0" />
        <text x="39" y="39" fill="#c4cad6" fontFamily="Open Sans, sans-serif" fontSize="13" fontWeight="600" fontStyle="italic">
          systems
        </text>
        <text x="94" y="27" fill="#aaa" fontFamily="Open Sans, sans-serif" fontSize="7">
          ®
        </text>
        <g fill="#cf463d">
          <path d="M8 24l3 2h4l3-2 1 4c-1 4-3 6-6 6-4-1-5-5-5-10z" />
          <path d="M12 36l4 1 1 5-1 14-3-3-1 1-2-4 1-7zM22 32l3 1 1 5-3 4-2-1z" />
          <path d="M13 15c6 5 10 8 16 15l3-7 1-20 2 6 3 1-1 10-1 7-3 8 4 12 5 10-3 2-8-17-2 12-2 11-2 1-1-6 1-13 1-10C23 28 19 23 13 15z" />
          <circle cx="47" cy="58" r="1.800" />
          <circle cx="44" cy="66" r="1" />
          <path d="M27 68l5 1-3 3z" />
        </g>
        <path d="M19 16l8 9M31 24l10 4" stroke="#cf463d" strokeWidth=".8" />
      </svg>
    </footer>
  );
}

function AddPortalDialog() {
  const label = "flex h-9 items-center bg-[#f4f4f4] pt-[3px] pl-[6px] font-bold text-[#555a66]";
  const box = "h-[21px] w-[167px] border bg-white pt-0.5 pl-[2px] leading-[14px] text-black outline-none";

  return (
    <div
      role="dialog"
      aria-label="Add Portal"
      className="relative mt-0.5 w-[338px] border border-[#333] bg-white shadow-[0_1px_5px_rgba(0,0,0,0.4)]"
    >
      <div className="flex h-7 items-center justify-between border-b-2 border-[#333] bg-linear-to-b from-[#8a8a8a] to-[#1f1f1f] pr-3 pl-[10px] text-white">
        <h2 className="pt-0.5 text-[12px] font-bold">Add Portal</h2>
        <button type="button" aria-label="Close" className="pb-0.5">
          <CloseGlyph className="text-[#70869e]" />
        </button>
      </div>
      <form className="pt-[25px] pb-[15px] pl-5" onSubmit={(e) => e.preventDefault()}>
        <div className="flex items-center gap-[3px]">
          <label htmlFor="comment" className={`${label} w-[82px]`}>
            Comment:
          </label>
          <span className="relative mt-0.5">
            <input id="comment" defaultValue="portal xen" className={`${box} border-[#769dc0]`} />
            <span className="absolute top-[3px] left-[60px] h-[15px] w-px bg-black" />
          </span>
          <svg viewBox="0 0 16 16" className="mb-2 ml-[19px] size-4" aria-hidden="true">
            <circle cx="8" cy="8" r="7.500" fill="#d5d5d5" stroke="#666" />
            <path d="M8.500 3.500h1.500M6.500 6.500H9L7.500 12H10" fill="none" stroke="#333" strokeWidth="1.800" />
          </svg>
        </div>
        <p className="mt-2 pl-[14px] leading-[14px]">Portal IP</p>
        <div className="mt-[9px] flex flex-col gap-0.5 pl-[26px]">
          <div className="flex items-center gap-[3px]">
            <label htmlFor="ip" className={`${label} w-[85px]`}>
              IP Address:
            </label>
            <span className="relative">
              <select
                id="ip"
                className="block h-[23px] w-16 appearance-none border border-[#b5b8c8] bg-white pt-0.5 pl-[2px] text-[9px] font-bold text-[#555]"
              >
                <option>0.0.0.0</option>
              </select>
              <span className="pointer-events-none absolute top-px right-px flex h-[21px] w-5 items-center justify-center border-l border-[#b5b8c8] bg-white">
                <span className="flex h-[19px] w-[18px] items-center justify-center border border-[#c4c4c4] bg-[#efefef]">
                  <svg viewBox="0 0 8 4" className="h-1 w-2" aria-hidden="true">
                    <path d="M0 0h8L4 4z" fill="#8fa5cf" />
                  </svg>
                </span>
              </span>
            </span>
          </div>
          <div className="flex items-center gap-[3px]">
            <label htmlFor="port" className={`${label} w-[85px]`}>
              Port:
            </label>
            <input id="port" defaultValue="3260" className={`${box} border-[#b5b8c8]`} />
          </div>
        </div>
        <a href="#extra" className="mt-2 ml-[14px] block w-fit leading-[14px] text-[#3b73af]">
          Add extra Portal IP
        </a>
        <div className="mt-2 flex gap-[9px] pl-[3px]">
          <BlueButton type="submit">OK</BlueButton>
          <BlueButton>Cancel</BlueButton>
        </div>
      </form>
    </div>
  );
}

export default function App() {
  return (
    <div className="flex h-screen flex-col overflow-hidden bg-white font-['DejaVu_Sans',sans-serif] text-[11px] text-black">
      <BrowserChrome />
      <div className="relative flex min-h-0 flex-1 flex-col">
        <Header />
        <nav className="flex h-[53px] shrink-0 justify-between border-t border-l border-[#c3c9d6] bg-linear-to-b from-[#fcfcfc] to-[#ececec]">
          <div className="flex gap-1">
            {["System", "Network", "Storage", "Sharing", "Services", "Plugins", "Jails", "Reporting"].map((name) => (
              <span key={name} className="flex min-w-[68px] justify-center">
                <ToolButton name={name} />
              </span>
            ))}
          </div>
          <div className="flex gap-1 pr-0.5">
            {["Account", "Help", "Log Out", "Alert"].map((name) => (
              <ToolButton key={name} name={name} />
            ))}
          </div>
        </nav>
        <div className="flex min-h-0 flex-1">
          <Sidebar />
          <Content />
        </div>
        <Footer />
        <div className="absolute inset-0 flex items-center justify-center bg-black/45">
          <AddPortalDialog />
        </div>
      </div>
    </div>
  );
}
